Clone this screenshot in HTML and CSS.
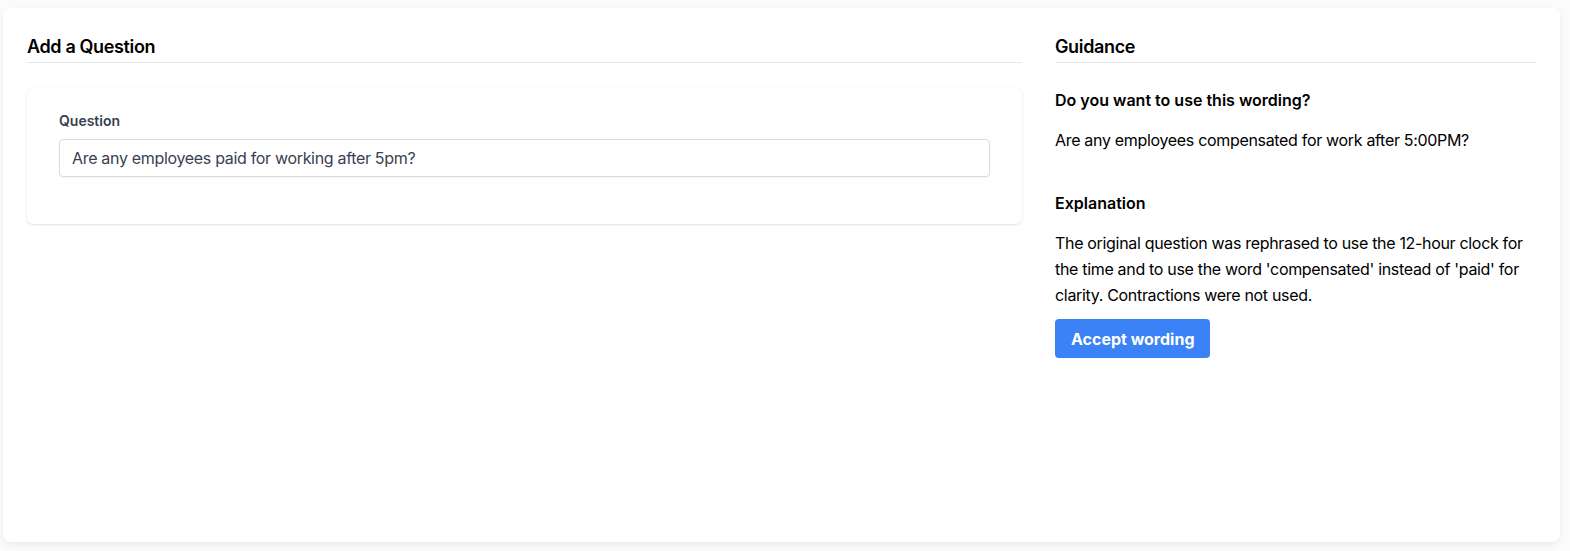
FILE: index.html
```html
<!DOCTYPE html>
<html lang="en">
<head>
<meta charset="utf-8">
<title>Add a Question</title>
<link rel="stylesheet" href="styles.css">
</head>
<body>
<div class="page">
  <div class="card">
    <section class="main-col">
      <h2 class="section-title">Add a Question</h2>
      <div class="form-card">
        <label class="field-label" for="q">Question</label>
        <input id="q" class="text-input" type="text" value="Are any employees paid for working after 5pm?">
      </div>
    </section>
    <aside class="side-col">
      <h2 class="section-title">Guidance</h2>
      <h3 class="sub-title first">Do you want to use this wording?</h3>
      <p class="body-text">Are any employees compensated for work after 5:00PM?</p>
      <h3 class="sub-title second">Explanation</h3>
      <p class="body-text">The original question was rephrased to use the 12-hour clock for the time and to use the word 'compensated' instead of 'paid' for clarity. Contractions were not used.</p>
      <button class="btn-primary" type="button">Accept wording</button>
    </aside>
  </div>
</div>
</body>
</html>
```

FILE: styles.css
```css
* { box-sizing: border-box; }
html, body { margin: 0; padding: 0; }
body {
  background: #fbfbfb;
  font-family: Inter, "Helvetica Neue", "Liberation Sans", Arial, sans-serif;
  color: #000;
  -webkit-font-smoothing: antialiased;
}
.page {
  height: 551px;
  padding: 8px 10px 9px 3px;
}
.card {
  height: 100%;
  background: #fff;
  border-radius: 8px;
  box-shadow: 0 3px 8px -1px rgba(0,0,0,0.08), 0 1px 3px -1px rgba(0,0,0,0.04);
  padding: 25px 23px 24px 24px;
  display: flex;
  gap: 33px;
}
.main-col { width: 995px; flex: none; }
.side-col { flex: 1; min-width: 0; }
.section-title {
  margin: 0;
  font-size: 18px;
  font-weight: 600;
  letter-spacing: -0.02em;
  line-height: 28px;
  padding-bottom: 1px;
  border-bottom: 1px solid #e5e7eb;
}
.form-card {
  margin-top: 25px;
  background: #fff;
  border-radius: 6px;
  box-shadow: 0 1px 3px 0 rgba(0,0,0,0.1), 0 1px 2px -1px rgba(0,0,0,0.08);
  padding: 23px 32px 47px 32px;
  height: 136px;
}
.field-label {
  display: block;
  font-size: 14px;
  font-weight: 600;
  line-height: 20px;
  color: #374151;
  margin-bottom: 8px;
}
.text-input {
  display: block;
  width: 100%;
  height: 38px;
  border: 1px solid #d9dbe0;
  border-radius: 4px;
  padding: 0 12px;
  font-family: inherit;
  font-size: 16px;
  letter-spacing: -0.02em;
  color: #374151;
  background: #fff;
  box-shadow: 0 1px 2px rgba(0,0,0,0.05);
  outline: none;
}
.sub-title {
  margin: 0;
  font-size: 16px;
  font-weight: 600;
  line-height: 24px;
}
.sub-title.first { margin-top: 25px; }
.sub-title.second { margin-top: 38px; }
.body-text {
  margin: 15px 0 0;
  font-size: 16px;
  letter-spacing: -0.02em;
  line-height: 26px;
}
.btn-primary {
  display: block;
  margin-top: 11px;
  height: 39px;
  padding: 0 16px;
  border: none;
  border-radius: 4px;
  background: #3b82f6;
  color: #fff;
  font-family: inherit;
  font-size: 16px;
  font-weight: 700;
}
```
